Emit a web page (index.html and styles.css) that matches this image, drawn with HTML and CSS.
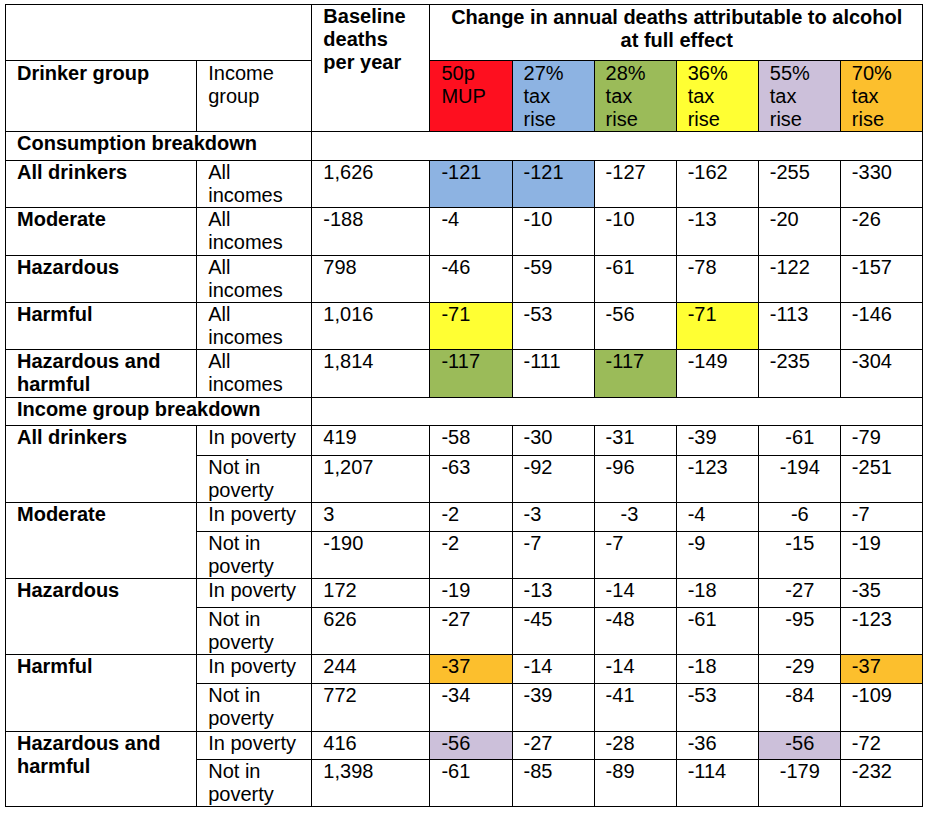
FILE: index.html
```html
<!DOCTYPE html>
<html lang="en">
  <head>
    <meta charset="UTF-8" />
    <meta name="viewport" content="width=device-width, initial-scale=1.0" />
    <title>Change in annual deaths attributable to alcohol</title>

    <link rel="stylesheet" href="styles.css">
  </head>
  <body>
    <table class="deaths">
      <colgroup>
        <col class="col-drinker" />
        <col class="col-income" />
        <col class="col-base" />
        <col class="col-policy" />
        <col class="col-policy" />
        <col class="col-policy" />
        <col class="col-policy" />
        <col class="col-policy" />
        <col class="col-policy" />
      </colgroup>
      <thead>
        <tr class="head-top">
          <th colspan="2"></th>
          <th rowspan="2">Baseline deaths per year</th>
          <th colspan="6" class="title">Change in annual deaths attributable to alcohol<br />at full effect</th>
        </tr>
        <tr class="head-policies">
          <th>Drinker group</th>
          <th class="plain">Income group</th>
          <th class="plain red">50p MUP</th>
          <th class="plain blue">27% tax rise</th>
          <th class="plain green">28% tax rise</th>
          <th class="plain yellow">36% tax rise</th>
          <th class="plain lilac">55% tax rise</th>
          <th class="plain orange">70% tax rise</th>
        </tr>
      </thead>
      <tbody>
        <tr class="section">
          <th colspan="2">Consumption breakdown</th>
          <td colspan="7"></td>
        </tr>
        <tr class="two">
          <th>All drinkers</th>
          <td>All incomes</td>
          <td>1,626</td>
          <td class="blue">-121</td>
          <td class="blue">-121</td>
          <td>-127</td>
          <td>-162</td>
          <td>-255</td>
          <td>-330</td>
        </tr>
        <tr class="two tall">
          <th>Moderate</th>
          <td>All incomes</td>
          <td>-188</td>
          <td>-4</td>
          <td>-10</td>
          <td>-10</td>
          <td>-13</td>
          <td>-20</td>
          <td>-26</td>
        </tr>
        <tr class="two">
          <th>Hazardous</th>
          <td>All incomes</td>
          <td>798</td>
          <td>-46</td>
          <td>-59</td>
          <td>-61</td>
          <td>-78</td>
          <td>-122</td>
          <td>-157</td>
        </tr>
        <tr class="two">
          <th>Harmful</th>
          <td>All incomes</td>
          <td>1,016</td>
          <td class="yellow">-71</td>
          <td>-53</td>
          <td>-56</td>
          <td class="yellow">-71</td>
          <td>-113</td>
          <td>-146</td>
        </tr>
        <tr class="two tall">
          <th>Hazardous and harmful</th>
          <td>All incomes</td>
          <td>1,814</td>
          <td class="green">-117</td>
          <td>-111</td>
          <td class="green">-117</td>
          <td>-149</td>
          <td>-235</td>
          <td>-304</td>
        </tr>

        <tr class="section short">
          <th colspan="2">Income group breakdown</th>
          <td colspan="7"></td>
        </tr>
        <tr class="one tall">
          <th rowspan="2">All drinkers</th>
          <td>In poverty</td>
          <td>419</td>
          <td>-58</td>
          <td>-30</td>
          <td>-31</td>
          <td>-39</td>
          <td class="mid">-61</td>
          <td>-79</td>
        </tr>
        <tr class="two">
          <td>Not in poverty</td>
          <td>1,207</td>
          <td>-63</td>
          <td>-92</td>
          <td>-96</td>
          <td>-123</td>
          <td class="mid">-194</td>
          <td>-251</td>
        </tr>
        <tr class="one">
          <th rowspan="2">Moderate</th>
          <td>In poverty</td>
          <td>3</td>
          <td>-2</td>
          <td>-3</td>
          <td class="indent">-3</td>
          <td>-4</td>
          <td class="mid">-6</td>
          <td>-7</td>
        </tr>
        <tr class="two">
          <td>Not in poverty</td>
          <td>-190</td>
          <td>-2</td>
          <td>-7</td>
          <td>-7</td>
          <td>-9</td>
          <td class="mid">-15</td>
          <td>-19</td>
        </tr>
        <tr class="one">
          <th rowspan="2">Hazardous</th>
          <td>In poverty</td>
          <td>172</td>
          <td>-19</td>
          <td>-13</td>
          <td>-14</td>
          <td>-18</td>
          <td class="mid">-27</td>
          <td>-35</td>
        </tr>
        <tr class="two">
          <td>Not in poverty</td>
          <td>626</td>
          <td>-27</td>
          <td>-45</td>
          <td>-48</td>
          <td>-61</td>
          <td class="mid">-95</td>
          <td>-123</td>
        </tr>
        <tr class="one">
          <th rowspan="2">Harmful</th>
          <td>In poverty</td>
          <td>244</td>
          <td class="orange">-37</td>
          <td>-14</td>
          <td>-14</td>
          <td>-18</td>
          <td class="mid">-29</td>
          <td class="orange">-37</td>
        </tr>
        <tr class="two tall">
          <td>Not in poverty</td>
          <td>772</td>
          <td>-34</td>
          <td>-39</td>
          <td>-41</td>
          <td>-53</td>
          <td class="mid">-84</td>
          <td>-109</td>
        </tr>
        <tr class="one short">
          <th rowspan="2">Hazardous and harmful</th>
          <td>In poverty</td>
          <td>416</td>
          <td class="lilac">-56</td>
          <td>-27</td>
          <td>-28</td>
          <td>-36</td>
          <td class="mid lilac">-56</td>
          <td>-72</td>
        </tr>
        <tr class="two">
          <td>Not in poverty</td>
          <td>1,398</td>
          <td>-61</td>
          <td>-85</td>
          <td>-89</td>
          <td>-114</td>
          <td class="mid">-179</td>
          <td>-232</td>
        </tr>
      </tbody>
    </table>
  </body>
</html>
```

FILE: styles.css
```css
body {
  font-family: "Liberation Sans", Arial, sans-serif;
  font-size: 20px;
  color: #000;
  background: #fff;
  margin: 0;
  padding: 4px 0 0 5px;
}

.deaths {
  border-collapse: collapse;
  table-layout: fixed;
  width: 918px;

  .col-drinker {
    width: 191px;
  }

  .col-income {
    width: 115px;
  }

  .col-base {
    width: 118px;
  }

  .col-policy {
    width: 82px;
  }

  th,
  td {
    border: 1px solid #000;
    padding: 0 10px 0 11px;
    line-height: 23px;
    text-align: left;
    vertical-align: top;
    font-weight: 400;
  }

  th {
    font-weight: 700;
  }

  th.plain {
    font-weight: 400;
  }

  .title {
    text-align: center;
    padding-top: 1px;
  }

  .mid {
    text-align: center;
  }

  .indent {
    padding-left: 26px;
  }
}

.head-top {
  height: 56px;
}

.head-policies {
  height: 71px;

  th {
    padding-top: 1px;
  }
}

.section {
  height: 29px;

  &.short {
    height: 28px;
  }
}

.one {
  height: 29px;

  &.tall {
    height: 30px;
  }

  &.short {
    height: 28px;
  }
}

.two {
  height: 47px;

  &.tall {
    height: 48px;
  }
}

.red {
  background: #fe0f1f;
}

.blue {
  background: #8db3e2;
}

.green {
  background: #9bbb59;
}

.yellow {
  background: #ffff33;
}

.lilac {
  background: #ccc0da;
}

.orange {
  background: #fcbf2d;
}
```
